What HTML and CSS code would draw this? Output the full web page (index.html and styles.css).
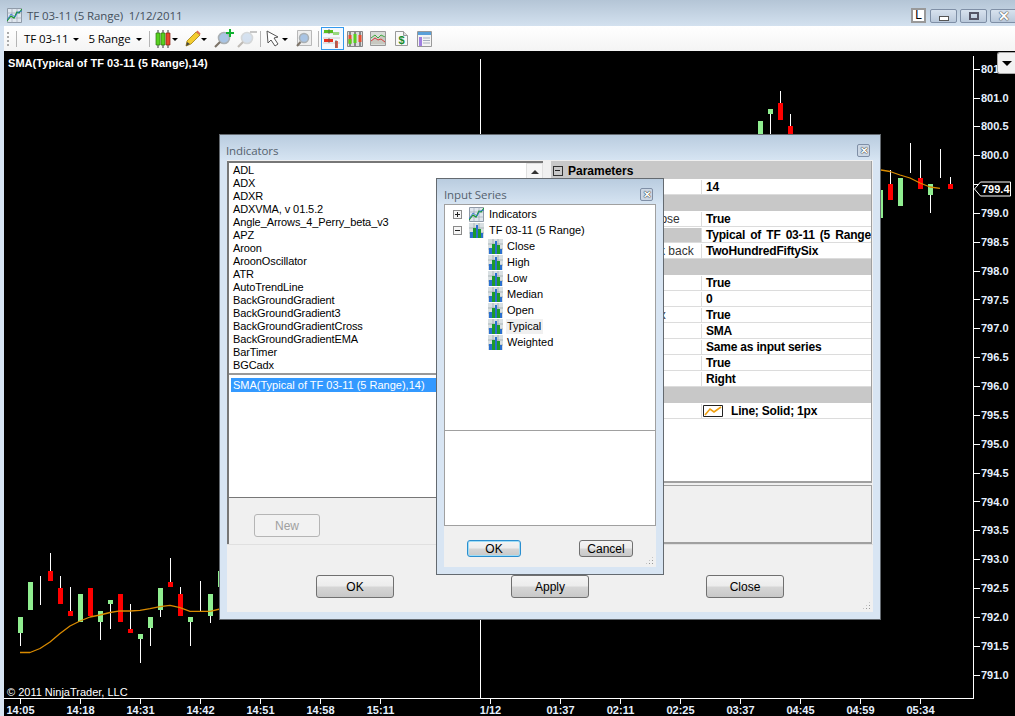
FILE: index.html
```html
<!DOCTYPE html>
<html lang="en">

<head>
  <meta charset="UTF-8">
  <title>TF 03-11 (5 Range) 1/12/2011</title>
  <link rel="stylesheet" href="styles.css">
</head>

<body>
  <svg class="defs" width="0" height="0">
    <symbol id="ico-bars" viewBox="0 0 15 15">
      <path d="M0 0h15v15H0z" fill="#d8dfe2" />
      <path d="M0 5h15M0 10h15M5 0v15M10 0v15" stroke="#8f9aa0" stroke-width=".6" />
      <path d="M1 9h3v6H1z" fill="#2a6fd0" />
      <path d="M4 5h3v10H4z" fill="#1c9a2c" />
      <path d="M7 2h2v13H7z" fill="#2a6fd0" />
      <path d="M9 6h3v9H9z" fill="#1c9a2c" />
      <path d="M12 10h2v5h-2z" fill="#2a6fd0" />
    </symbol>
    <symbol id="ico-lines" viewBox="0 0 15 15">
      <path d="M.5.5h14v14H.5z" fill="#dfe6ee" stroke="#8f9aa8" />
      <path d="M0 5h15M0 10h15M5 0v15M10 0v15" stroke="#98a2ae" stroke-width=".6" />
      <path d="M0 13l4-5 3 2 3-6 2 1 3-4" fill="none" stroke="#1c9a2c" stroke-width="1.2" />
      <path d="M0 12l4-6 4 3 3-5 4-1" fill="none" stroke="#2a6fd0" stroke-width=".8" />
    </symbol>
    <symbol id="ico-lens" viewBox="0 0 18 18">
      <circle cx="10" cy="8" r="5.5" fill="#a9c4e4" stroke="#aab0b4" stroke-width="1.6" />
      <path d="M6 12l-5 5" stroke="#7d7468" stroke-width="2.2" />
    </symbol>
  </svg>

  <div class="window">
    <header class="titlebar">
      <svg class="app-icon" width="15" height="15"><use href="#ico-lines" /></svg>
      <span class="win-title">TF 03-11 (5 Range)&nbsp; 1/12/2011</span>
      <span class="win-lock">L</span>
      <div class="win-btns">
        <span class="win-btn"><i class="glyph-min"></i></span>
        <span class="win-btn"><i class="glyph-max"></i></span>
        <span class="win-btn win-close">✕</span>
      </div>
    </header>

    <div class="toolbar">
      <span class="grip"></span>
      <span class="sep"></span>
      <span class="tb-text">TF 03-11</span><span class="caret"></span>
      <span class="tb-text range">5 Range</span><span class="caret caret-end"></span>
      <span class="sep"></span>
      <svg class="tb-ico candles" width="16" height="18" viewBox="0 0 16 18">
        <path d="M3 0v18M8 0v18M13 0v18" stroke="#333" />
        <path d="M1 3h4v12H1zM6 3h4v12H6z" fill="#58d020" stroke="#2c7a10" stroke-width=".7" />
        <path d="M11 3h4v12h-4z" fill="#e8452e" stroke="#8a2010" stroke-width=".7" />
      </svg><span class="caret"></span>
      <svg class="tb-ico pencil" width="16" height="18" viewBox="0 0 16 18">
        <path d="M1 16l1-5L11 2l4 3-9 9z" fill="#f4cc30" stroke="#a08010" stroke-width=".8" />
        <path d="M11 2l1.500-1.500 3 3L15 5z" fill="#e06a50" />
        <path d="M1 16l1-4 3 2z" fill="#444" />
      </svg><span class="caret"></span>
      <span class="lens-btn">
        <svg width="18" height="18"><use href="#ico-lens" /></svg>
        <svg class="plus" width="8" height="8" viewBox="0 0 8 8"><path d="M3 0h2v3h3v2H5v3H3V5H0V3h3z" fill="#10b030" /></svg>
      </span>
      <span class="lens-btn off">
        <svg width="18" height="18"><use href="#ico-lens" /></svg>
        <i class="minus"></i>
      </span>
      <span class="sep"></span>
      <svg class="tb-ico" width="15" height="17" viewBox="0 0 15 17">
        <path d="M1 1l1 12 3-3 4 6 3-2-4-6 4-1z" fill="#fff" stroke="#555" />
      </svg><span class="caret"></span>
      <svg class="tb-ico zoombox" width="16" height="17" viewBox="0 0 16 17">
        <path d="M1.500.5h14v15h-14z" fill="#eee" stroke="#b8b8b8" />
        <circle cx="8" cy="8" r="4.500" fill="#a9c4e4" stroke="#aab0b4" stroke-width="1.500" />
        <path d="M4.500 12L1 16" stroke="#7d7468" stroke-width="2" />
      </svg>
      <span class="sep"></span>
      <span class="tb-active">
        <svg width="19" height="19" viewBox="0 0 19 19">
          <path d="M0 4h17M0 9h17M0 14h17" stroke="#ccc" />
          <path d="M1 1h9v3H1z" fill="#58c020" />
          <path d="M10 3h6v3h-6z" fill="#98d880" />
          <path d="M1 10h9v3H1z" fill="#e83020" />
          <path d="M12 12h3v7h-3z" fill="#e06050" />
          <path d="M6 0v5M6 9v5M13 11v8" stroke="#555" stroke-width=".7" />
        </svg>
      </span>
      <svg class="tb-ico ico-b" width="16" height="16" viewBox="0 0 16 16">
        <path d="M.5.5h15v15H.5z" fill="#ddd" stroke="#888" />
        <path d="M3 1v14M8 1v14M13 1v14" stroke="#333" />
        <path d="M1.500 4h3v8h-3zM11.500 4h3v7h-3z" fill="#e85030" />
        <path d="M6.500 3h3v9h-3zM1.500 8h3v5h-3z" fill="#58d020" />
      </svg>
      <svg class="tb-ico ico-c" width="16" height="15" viewBox="0 0 16 15">
        <path d="M.5.5h15v14H.5z" fill="#d8dcd8" stroke="#999" />
        <path d="M1 10l4-5 3 3 3-4 4 3v6H1z" fill="#c8c8c0" />
        <path d="M1 7l4-3 3 3 3-3 4 2" fill="none" stroke="#40a840" />
        <path d="M1 10l4-3 3 2 3-1 4 3" fill="none" stroke="#d84040" />
      </svg>
      <svg class="tb-ico ico-d" width="13" height="15" viewBox="0 0 13 15">
        <path d="M.5.5h8l4 4v10H.5z" fill="#f8f8f8" stroke="#999" />
        <path d="M8.500.5v4h4" fill="#ddd" stroke="#999" />
        <text class="dollar" x="6.500" y="12.500" text-anchor="middle">$</text>
      </svg>
      <svg class="tb-ico ico-d" width="15" height="16" viewBox="0 0 15 16">
        <path d="M.5.5h14v15H.5z" fill="#f4f4f4" stroke="#999" />
        <path d="M1 1h13v3H1z" fill="#5aa0d8" />
        <path d="M2 6h3v9H2z" fill="#a080e0" />
        <path d="M6 7h7M6 9.500h7M6 12h7" stroke="#a8b0c0" />
      </svg>
    </div>

    <main class="chart">
      <svg class="plot" width="1011" height="665" viewBox="4 51 1011 665">
        <!-- axes -->
        <path class="axis" d="M480.500 59v639M973.500 56v642.500H4" />
        <path class="axis" d="M974 69h6M974 98h6M974 126.800h6M974 155.700h6M974 184.500h6M974 213.400h6M974 242.200h6M974 271h6M974 299.900h6M974 328.700h6M974 357.600h6M974 386.400h6M974 415.300h6M974 444.100h6M974 473h6M974 501.800h6M974 530.700h6M974 559.500h6M974 588.400h6M974 617.200h6M974 646h6M974 675h6" />
        <path class="axis" d="M20.500 699v5M80.500 699v5M140.500 699v5M200.500 699v5M260.500 699v5M320.500 699v5M380.500 699v5M490.500 699v5M560.500 699v5M620.500 699v5M680.500 699v5M740.500 699v5M800.500 699v5M860.500 699v5M920.500 699v5" />

        <!-- candles, left group then top right group -->
        <path class="wick" d="M20 633h1v13h-1zM40 576h1v29h-1zM50 553h1v18h-1zM60 576h1v12h-1zM70 587h1v24h-1zM100 622h1v18h-1zM110 604h1v25h-1zM130 604h1v25h-1zM140 639h1v24h-1zM150 628h1v18h-1zM160 610h1v7h-1zM170 558h1v24h-1zM180 587h1v7h-1zM190 622h1v24h-1zM200 581h1v30h-1zM210 616h1v7h-1z" />
        <path class="wick" d="M770 114h1v21h-1zM780 91h1v12h-1zM790 114h1v12h-1zM890 170h1v14h-1zM910 143h1v30h-1zM920 160h1v18h-1zM930 195h1v18h-1zM940 149h1v29h-1zM950 177h1v7h-1z" />
        <path class="up" d="M18 617h5v16h-5zM28 582h5v28h-5zM78 594h5v28h-5zM98 611h5v11h-5zM108 600h5v4h-5zM138 634h5v5h-5zM148 617h5v11h-5zM158 588h5v22h-5zM188 617h5v5h-5zM208 594h5v22h-5zM218 571h5v16h-5z" />
        <path class="up" d="M758 121h5v14h-5zM768 109h5v5h-5zM881 190h2v28h-2zM898 178h5v28h-5zM928 184h5v11h-5z" />
        <path class="down" d="M48 571h5v10h-5zM58 588h5v16h-5zM68 611h5v5h-5zM88 588h5v28h-5zM118 594h5v28h-5zM128 629h5v4h-5zM168 582h5v5h-5zM178 594h5v22h-5z" />
        <path class="down" d="M778 103h5v17h-5zM788 126h5v9h-5zM888 184h5v16h-5zM918 178h5v11h-5zM948 184h5v5h-5z" />
        <path class="sma" d="M20 652.500L30 652.500 40 648.500 50 642 60 633.500 70 626 80 621 90 617 100 615 110 612.500 120 610.800 130 611 140 610.300 150 608.700 160 606.700 170 605.300 180 607.700 190 611.300 200 611.300 210 611.300 220 609" />
        <path class="sma" d="M881 170L890 171.500 900 175 910 178 920 183 930 187 940 188.300" />

        <!-- price axis labels -->
        <g class="lbl">
          <text x="981" y="73">801.5</text>
          <text x="981" y="102">801.0</text>
          <text x="981" y="130">800.5</text>
          <text x="981" y="159">800.0</text>
          <text x="981" y="217">799.0</text>
          <text x="981" y="246">798.5</text>
          <text x="981" y="275">798.0</text>
          <text x="981" y="304">797.5</text>
          <text x="981" y="332">797.0</text>
          <text x="981" y="361">796.5</text>
          <text x="981" y="390">796.0</text>
          <text x="981" y="419">795.5</text>
          <text x="981" y="448">795.0</text>
          <text x="981" y="477">794.5</text>
          <text x="981" y="506">794.0</text>
          <text x="981" y="534">793.5</text>
          <text x="981" y="563">793.0</text>
          <text x="981" y="592">792.5</text>
          <text x="981" y="621">792.0</text>
          <text x="981" y="650">791.5</text>
          <text x="981" y="679">791.0</text>
        </g>
        <!-- time axis labels -->
        <g class="lbl mid">
          <text x="20.500" y="714">14:05</text>
          <text x="80.500" y="714">14:18</text>
          <text x="140.500" y="714">14:31</text>
          <text x="200.500" y="714">14:42</text>
          <text x="260.500" y="714">14:51</text>
          <text x="320.500" y="714">14:58</text>
          <text x="380.500" y="714">15:11</text>
          <text x="490.500" y="714">1/12</text>
          <text x="560.500" y="714">01:37</text>
          <text x="620.500" y="714">02:11</text>
          <text x="680.500" y="714">02:25</text>
          <text x="740.500" y="714">03:37</text>
          <text x="800.500" y="714">04:45</text>
          <text x="860.500" y="714">04:59</text>
          <text x="920.500" y="714">05:34</text>
        </g>
        <!-- current price marker -->
        <path class="marker" d="M974.500 189l6-7h30v14h-30z" />
        <text class="lbl marker-text" x="982" y="193">799.4</text>
      </svg>

      <div class="chart-title">SMA(Typical of TF 03-11 (5 Range),14)</div>
      <div class="copyright">© 2011 NinjaTrader, LLC</div>
      <button class="axis-menu"></button>

      <!-- Indicators dialog -->
      <section class="dialog dlg-indicators">
        <div class="dlg-title"><span>Indicators</span><span class="dlg-x">✕</span></div>
        <div class="dlg-body">
          <div class="dlg-main">
            <div class="left-pane">
              <div class="list-wrap">
                <ul class="ind-list">
                  <li>ADL</li>
                  <li>ADX</li>
                  <li>ADXR</li>
                  <li>ADXVMA, v 01.5.2</li>
                  <li>Angle_Arrows_4_Perry_beta_v3</li>
                  <li>APZ</li>
                  <li>Aroon</li>
                  <li>AroonOscillator</li>
                  <li>ATR</li>
                  <li>AutoTrendLine</li>
                  <li>BackGroundGradient</li>
                  <li>BackGroundGradient3</li>
                  <li>BackGroundGradientCross</li>
                  <li>BackGroundGradientEMA</li>
                  <li>BarTimer</li>
                  <li>BGCadx</li>
                </ul>
                <div class="scrollbar"><span class="scroll-up"></span></div>
              </div>
              <div class="applied">
                <div class="applied-row">SMA(Typical of TF 03-11 (5 Range),14)</div>
              </div>
              <div class="new-row"><button class="btn btn-off">New</button></div>
            </div>
            <div class="right-pane">
              <div class="grid">
                <div class="cat"><i class="box-minus"></i>Parameters</div>
                <div class="row"><span class="key">Period</span><span class="val">14</span></div>
                <div class="cat"><i class="box-minus"></i>Data</div>
                <div class="row"><span class="key">Calculate on bar close</span><span class="val">True</span></div>
                <div class="row"><span class="key sel"></span><span class="val wide">Typical of TF 03-11 (5 Range)</span></div>
                <div class="row"><span class="key">Maximum bars look back</span><span class="val">TwoHundredFiftySix</span></div>
                <div class="cat"><i class="box-minus"></i>Visual</div>
                <div class="row"><span class="key">Auto scale</span><span class="val">True</span></div>
                <div class="row"><span class="key">Displacement</span><span class="val">0</span></div>
                <div class="row"><span class="key">Display in Data Box</span><span class="val">True</span></div>
                <div class="row"><span class="key">Label</span><span class="val">SMA</span></div>
                <div class="row"><span class="key">Panel</span><span class="val">Same as input series</span></div>
                <div class="row"><span class="key">Price marker</span><span class="val">True</span></div>
                <div class="row"><span class="key">Scale justification</span><span class="val">Right</span></div>
                <div class="cat"><i class="box-minus"></i>Plots</div>
                <div class="row">
                  <span class="key">Plot0</span>
                  <span class="val">
                    <svg class="plot-swatch" width="20" height="12" viewBox="0 0 20 12">
                      <path d="M.5.5h19v11H.5z" fill="#fff" stroke="#222" />
                      <path d="M2 10l5-6 4 3 7-5" fill="none" stroke="#f0a010" stroke-width="1.600" />
                    </svg>Line; Solid; 1px
                  </span>
                </div>
              </div>
              <div class="description"></div>
            </div>
          </div>
          <div class="dlg-foot">
            <button class="btn btn-wide">OK</button>
            <button class="btn btn-wide">Apply</button>
            <button class="btn btn-wide">Close</button>
            <span class="grip-corner"></span>
          </div>
        </div>
      </section>

      <!-- Input Series dialog -->
      <section class="dialog dlg-series">
        <div class="dlg-title"><span>Input Series</span><span class="dlg-x">✕</span></div>
        <div class="dlg-body">
          <div class="tree-box">
            <ul class="tree">
              <li><i class="box-plus"></i><svg width="15" height="15"><use href="#ico-lines" /></svg><span>Indicators</span></li>
              <li><i class="box-minus"></i><svg width="15" height="15"><use href="#ico-bars" /></svg><span>TF 03-11 (5 Range)</span></li>
              <li class="leaf"><svg width="15" height="15"><use href="#ico-bars" /></svg><span>Close</span></li>
              <li class="leaf"><svg width="15" height="15"><use href="#ico-bars" /></svg><span>High</span></li>
              <li class="leaf"><svg width="15" height="15"><use href="#ico-bars" /></svg><span>Low</span></li>
              <li class="leaf"><svg width="15" height="15"><use href="#ico-bars" /></svg><span>Median</span></li>
              <li class="leaf"><svg width="15" height="15"><use href="#ico-bars" /></svg><span>Open</span></li>
              <li class="leaf current"><svg width="15" height="15"><use href="#ico-bars" /></svg><span>Typical</span></li>
              <li class="leaf"><svg width="15" height="15"><use href="#ico-bars" /></svg><span>Weighted</span></li>
            </ul>
            <div class="tree-info"></div>
          </div>
          <div class="series-foot">
            <button class="btn btn-small btn-focus">OK</button>
            <button class="btn btn-small">Cancel</button>
            <span class="grip-corner"></span>
          </div>
        </div>
      </section>
    </main>
  </div>
</body>

</html>
```

FILE: styles.css
```css
* {
  box-sizing: border-box;
}

html,
body {
  margin: 0;
  height: 716px;
  overflow: hidden;
}

body {
  font-family: "Liberation Sans", Arial, sans-serif;
  font-size: 12px;
  color: #000;
  background: #d8e5f3;
}

.defs {
  position: absolute;
}

ul {
  list-style: none;
  margin: 0;
  padding: 0;
}

.window {
  display: flex;
  flex-direction: column;
  width: 1015px;
  height: 716px;
}

/* title bar */
.titlebar {
  display: flex;
  align-items: center;
  height: 26px;
  padding: 5px 0 0 7px;
  background: linear-gradient(to bottom, #b4c5d6, #d3e1ef);
}

.app-icon {
  margin-right: 5px;
}

.win-title {
  flex: 1;
  font-family: "Open Sans", sans-serif;
  font-size: 11.5px;
  letter-spacing: -0.1px;
  color: #45505c;
}

.win-lock {
  width: 15px;
  height: 15px;
  margin-right: 4px;
  border: 2px solid #999;
  background: #fff;
  font-size: 12px;
  line-height: 11px;
  text-align: center;
}

.win-btns {
  display: flex;
  gap: 3px;
  width: 85px;
  overflow: hidden;
}

.win-btn {
  display: flex;
  flex: 0 0 27px;
  align-items: center;
  justify-content: center;
  height: 14px;
  border: 1px solid #7f8fa6;
  border-radius: 2px;
  background: linear-gradient(to bottom, #d8e2ee, #b9c8da);
}

.win-close {
  font-size: 14px;
  font-weight: bold;
  color: #fff;
  text-shadow: 0 0 1px #222, 0 0 1px #222;
}

.glyph-min {
  width: 10px;
  height: 5px;
  margin-top: 5px;
  border: 1px solid #555;
  background: #fff;
}

.glyph-max {
  width: 10px;
  height: 8px;
  border: 2px solid #556;
}

/* toolbar */
.toolbar {
  display: flex;
  align-items: center;
  height: 25px;
  margin-left: 4px;
  padding-left: 3px;
  background: linear-gradient(to bottom, #fff, #f4f4f4);
}

.grip {
  width: 2px;
  height: 14px;
  margin-right: 7px;
  background: repeating-linear-gradient(to bottom, #aaa 0 2px, transparent 2px 4px);
}

.sep {
  flex: none;
  width: 1px;
  height: 16px;
  background: #b5b5b5;
}

.tb-text {
  margin: 0 4px 0 7px;
  font-family: "Open Sans", sans-serif;
  font-size: 11.5px;
  letter-spacing: -0.1px;
}

.range {
  margin-left: 6px;
}

.caret {
  flex: none;
  width: 0;
  height: 0;
  margin: 1px 3px 0 1px;
  border: 3px solid transparent;
  border-top: 3px solid #000;
  border-bottom: 0;
}

.caret-end {
  margin-right: 7px;
}

.tb-ico {
  flex: none;
  margin-left: 5px;
}

.candles {
  margin-left: 5px;
}

.pencil {
  margin-left: 4px;
  margin-right: -1px;
}

.lens-btn {
  position: relative;
  display: block;
  flex: none;
  width: 18px;
  height: 18px;
  margin-left: 4px;
}

.lens-btn.off {
  margin-left: 5px;
  margin-right: 5px;
  opacity: 0.45;
}

.plus {
  position: absolute;
  top: -1px;
  right: -2px;
}

.minus {
  position: absolute;
  top: 1px;
  right: -2px;
  width: 7px;
  height: 2px;
  background: #888;
}

.zoombox {
  margin-right: 6px;
}

.tb-active {
  display: flex;
  flex: none;
  align-items: center;
  justify-content: center;
  width: 23px;
  height: 23px;
  margin-left: 2px;
  border: 1px solid #3399ee;
  background: #f4f9fe;
}

.ico-b {
  margin-left: 3px;
}

.ico-c {
  margin-left: 7px;
}

.ico-d {
  margin-left: 9px;
}

.dollar {
  font-size: 11px;
  font-weight: bold;
  fill: #1a8a2a;
}

/* chart */
.chart {
  position: relative;
  flex: 1;
  margin-left: 4px;
  background: #000;
}

.plot {
  position: absolute;
  top: 0;
  left: 0;
  display: block;
}

.axis {
  fill: none;
  stroke: #fff;
  stroke-width: 1;
  shape-rendering: crispEdges;
}

.wick {
  fill: #fff;
}

.up {
  fill: #90ee90;
}

.down {
  fill: #f00;
}

.sma {
  fill: none;
  stroke: #d98a00;
  stroke-width: 1.3;
  stroke-linejoin: round;
}

.lbl {
  font-size: 11px;
  font-weight: bold;
  fill: #e6f1ff;
}

.mid {
  text-anchor: middle;
}

.marker {
  fill: #000;
  stroke: #fff;
}

.marker-text {
  fill: #fff;
  font-size: 11px;
}

.chart-title {
  position: absolute;
  top: 6px;
  left: 4px;
  font-size: 11px;
  font-weight: bold;
  letter-spacing: 0.05px;
  color: #fff;
}

.copyright {
  position: absolute;
  top: 635px;
  left: 3px;
  font-size: 11px;
  color: #fff;
}

.axis-menu {
  position: absolute;
  top: 1px;
  right: 0;
  width: 18px;
  height: 22px;
  padding: 0;
  border: 1px solid #aaa;
  border-right: 0;
  border-radius: 3px 0 0 3px;
  background: #f2f2f2;
}

.axis-menu::after {
  content: "";
  display: block;
  width: 0;
  margin: 1px auto 0;
  border: 5px solid transparent;
  border-top: 5px solid #000;
  border-bottom: 0;
}

/* dialogs */
.dialog {
  position: absolute;
  display: flex;
  flex-direction: column;
  border: 1px solid #646a70;
  background: #d8e5f3;
}

.dlg-indicators {
  top: 83px;
  left: 215px;
  width: 662px;
  height: 486px;
}

.dlg-series {
  top: 127px;
  left: 432px;
  width: 228px;
  height: 397px;
}

.dlg-title {
  display: flex;
  flex: none;
  align-items: center;
  justify-content: space-between;
  height: 25px;
  padding: 5px 10px 0 6px;
  background: linear-gradient(to bottom, #b9ccdf, #d6e4f2);
  font-family: "Open Sans", sans-serif;
  font-size: 11.5px;
  letter-spacing: -0.1px;
  color: #55626e;
}

.dlg-series .dlg-title {
  padding-left: 7px;
}

.dlg-x {
  width: 13px;
  height: 13px;
  border: 1px solid #7f8fa6;
  border-radius: 2px;
  background: #ccd7e4;
  font-size: 10px;
  font-weight: bold;
  line-height: 11px;
  text-align: center;
  color: #fff;
  text-shadow: 0 0 1px #111, 0 0 1px #111;
}

.dlg-body {
  display: flex;
  flex: 1;
  flex-direction: column;
  min-height: 0;
  margin: 0 7px 7px;
  background: #f0f0f0;
}

.dlg-main {
  display: flex;
  height: 385px;
  border-bottom: 1px solid #e0e0e0;
}

.left-pane {
  display: flex;
  flex: none;
  flex-direction: column;
  width: 316px;
  margin-top: 1px;
  border-left: 2px solid #777;
}

.list-wrap {
  display: flex;
  flex: none;
  height: 214px;
  border-top: 2px solid #777;
  border-bottom: 2px solid #999;
  background: #fff;
}

.ind-list {
  flex: 1;
  padding: 1px 0 0 4px;
  overflow: hidden;
  font-size: 11px;
}

.ind-list li {
  height: 13px;
  line-height: 13px;
  letter-spacing: -0.1px;
  white-space: nowrap;
}

.scrollbar {
  width: 17px;
  background: #f0f0f0;
}

.scroll-up {
  display: block;
  width: 17px;
  height: 17px;
  border: 1px solid #e0e0e0;
  background: #f6f6f6;
}

.scroll-up::after {
  content: "";
  display: block;
  width: 0;
  margin: 6px auto 0;
  border: 4px solid transparent;
  border-top: 0;
  border-bottom: 4px solid #333;
}

.applied {
  flex: none;
  height: 123px;
  padding: 3px 0 0 2px;
  border-bottom: 1px solid #777;
  background: #fff;
}

.applied-row {
  height: 14px;
  padding-left: 2px;
  font-size: 11px;
  line-height: 14px;
  background: #3399ff;
  color: #fff;
}

.new-row {
  flex: 1;
  padding: 16px 0 0 25px;
}

.right-pane {
  display: flex;
  flex: 1;
  flex-direction: column;
  min-width: 0;
  margin: 1px 1px 0 8px;
}

.grid {
  flex: none;
  height: 322px;
  border-right: 1px solid #a0a0a0;
  border-bottom: 2px solid #a0a0a0;
  background: #fff;
  overflow: hidden;
}

.cat {
  display: flex;
  align-items: center;
  height: 16px;
  padding-left: 2px;
  background: #c8c8c8;
  font-weight: bold;
}

.cat:first-child {
  height: 18px;
  padding-top: 2px;
}

.cat .box-minus {
  width: 10px;
  height: 10px;
  margin-right: 5px;
  border-color: #333;
  background: #c8c8c8;
}

.row {
  display: flex;
  height: 16px;
  padding-top: 1px;
  line-height: 14px;
  border-bottom: 1px solid #dcdcdc;
  white-space: nowrap;
}

.key {
  flex: 0 0 151px;
  padding-left: 10px;
  border-right: 1px solid #dcdcdc;
  color: #333;
}

.key.sel {
  background: #c8c8c8;
}

.val {
  flex: 1;
  display: flex;
  align-items: center;
  min-width: 0;
  padding-left: 4px;
  font-weight: bold;
  letter-spacing: -0.2px;
  overflow: hidden;
}

.val.wide {
  word-spacing: 2px;
}

.plot-swatch {
  flex: none;
  margin: 0 8px 0 -3px;
}

.description {
  flex: none;
  height: 59px;
  margin-top: 2px;
  border: 1px solid #a0a0a0;
  border-width: 1px 1px 2px;
  background: #f0f0f0;
}

.dlg-foot {
  position: relative;
  display: flex;
  flex: 1;
  gap: 117px;
  padding: 30px 0 0 89px;
}

.grip-corner {
  position: absolute;
  right: 2px;
  bottom: 2px;
  width: 9px;
  height: 9px;
  background: radial-gradient(circle, #999 0 .7px, transparent 1px) 0 0 / 3px 3px;
  clip-path: polygon(100% 0, 100% 100%, 0 100%);
}

/* buttons */
.btn {
  height: 23px;
  padding: 0;
  border: 1px solid #707070;
  border-radius: 3px;
  background: linear-gradient(to bottom, #f4f4f4 0, #ececec 48%, #d6d6d6 52%, #c8c8c8 100%);
  font-family: "Liberation Sans", Arial, sans-serif;
  font-size: 12px;
  color: #000;
}

.btn-wide {
  width: 78px;
}

.btn-off {
  width: 66px;
  border-color: #b5b5b5;
  background: #f2f2f2;
  color: #a0a0a0;
}

.btn-small {
  width: 54px;
  height: 17px;
  line-height: 14px;
}

.btn-focus {
  border-color: #2a8fd0;
  box-shadow: inset 0 0 0 1px #9fdcf5;
}

/* input series */
.tree-box {
  display: flex;
  flex: none;
  flex-direction: column;
  height: 322px;
  border: 1px solid #a0a0a0;
  background: #fff;
}

.tree {
  height: 226px;
  padding-top: 1px;
  border-bottom: 1px solid #a0a0a0;
  font-size: 11px;
}

.tree li {
  display: flex;
  align-items: center;
  height: 16px;
  padding-left: 8px;
}

.tree li svg {
  flex: none;
  margin: 0 5px 0 7px;
}

.tree .leaf {
  padding-left: 43px;
}

.tree .leaf svg {
  margin: 0 3px 0 0;
}

.tree .leaf span {
  padding: 0 2px 0 1px;
  line-height: 15px;
}

.tree .current span {
  background: #f0f0f0;
}

.box-plus,
.box-minus {
  position: relative;
  display: block;
  flex: none;
  width: 9px;
  height: 9px;
  border: 1px solid #8a8a8a;
  background: #f6f6f6;
}

.box-plus::before,
.box-minus::before {
  content: "";
  position: absolute;
  top: 3px;
  left: 1px;
  width: 5px;
  height: 1px;
  background: #222;
}

.box-plus::after {
  content: "";
  position: absolute;
  top: 1px;
  left: 3px;
  width: 1px;
  height: 5px;
  background: #222;
}

.series-foot {
  position: relative;
  display: flex;
  flex: 1;
  justify-content: space-between;
  padding: 14px 23px 0;
}
```
